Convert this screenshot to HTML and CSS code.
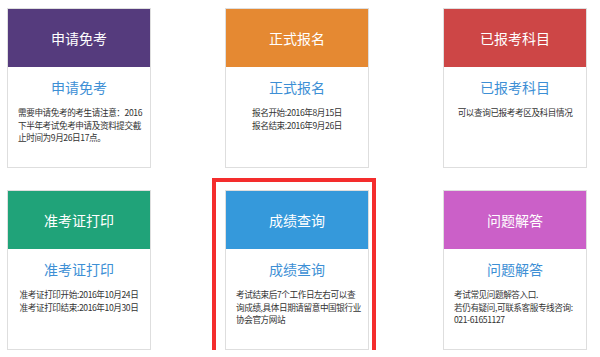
FILE: index.html
```html
<!DOCTYPE html>
<html lang="zh-CN">
<head>
<meta charset="UTF-8" />
<meta name="viewport" content="width=device-width, initial-scale=1" />
<title>考试服务</title>
<link rel="stylesheet" href="styles.css">
</head>
<body>
<div class="grid">
  <div class="card">
    <div class="card-head purple">申请免考</div>
    <div class="card-body">
      <h3>申请免考</h3>
      <p class="left">需要申请免考的考生请注意：2016<br>下半年考试免考申请及资料提交截<br>止时间为9月26日17点。</p>
    </div>
  </div>
  <div class="card">
    <div class="card-head orange">正式报名</div>
    <div class="card-body">
      <h3>正式报名</h3>
      <p>报名开始:2016年8月15日<br>报名结束:2016年9月26日</p>
    </div>
  </div>
  <div class="card">
    <div class="card-head red">已报考科目</div>
    <div class="card-body">
      <h3>已报考科目</h3>
      <p>可以查询已报考考区及科目情况</p>
    </div>
  </div>
  <div class="card">
    <div class="card-head green">准考证打印</div>
    <div class="card-body">
      <h3>准考证打印</h3>
      <p>准考证打印开始:2016年10月24日<br>准考证打印结束:2016年10月30日</p>
    </div>
  </div>
  <div class="card">
    <span class="mark"></span>
    <div class="card-head blue">成绩查询</div>
    <div class="card-body">
      <h3>成绩查询</h3>
      <p class="left">考试结束后7个工作日左右可以查<br>询成绩,具体日期请留意中国银行业<br>协会官方网站</p>
    </div>
  </div>
  <div class="card">
    <div class="card-head pink">问题解答</div>
    <div class="card-body">
      <h3>问题解答</h3>
      <p class="left">考试常见问题解答入口.<br>若仍有疑问,可联系客服专线咨询:<br>021-61651127</p>
    </div>
  </div>
</div>
</body>
</html>
```

FILE: styles.css
```css
body {
  margin: 0;
  background: #fff;
  font-family: "Noto Sans CJK SC", "Liberation Sans", sans-serif;
}
.grid {
  display: grid;
  grid-template-columns: repeat(3, 144px);
  grid-auto-rows: 160px;
  column-gap: 74px;
  row-gap: 22px;
  padding: 8px 0 0 7px;
}
.card {
  position: relative;
  border: 1px solid #dedede;
  background: #fff;
  box-sizing: border-box;
}
.card-head {
  height: 58px;
  display: flex;
  justify-content: center;
  align-items: center;
  color: #fff;
  font-size: 14px;
}
.purple { background-color: #553b7d; }
.orange { background-color: #e58932; }
.red { background-color: #cd4646; }
.green { background-color: #20a379; }
.blue { background-color: #3599db; }
.pink { background-color: #cb60c8; }
.card-body {
  padding: 10px 10px 0 10px;
}
.card-body h3 {
  margin: 0;
  height: 20px;
  line-height: 20px;
  text-align: center;
  font-size: 14px;
  font-weight: normal;
  color: #3d8fd5;
}
.card-body p {
  margin: 9px 0 0 0;
  font-size: 8.6px;
  letter-spacing: -0.4px;
  line-height: 12.5px;
  color: #333;
  text-align: center;
  white-space: nowrap;
}
.card-body p.left {
  text-align: left;
}
.mark {
  position: absolute;
  top: -13px;
  left: -14px;
  right: -8px;
  bottom: -6px;
  border: 4px solid #f42d2d;
  pointer-events: none;
}
```
